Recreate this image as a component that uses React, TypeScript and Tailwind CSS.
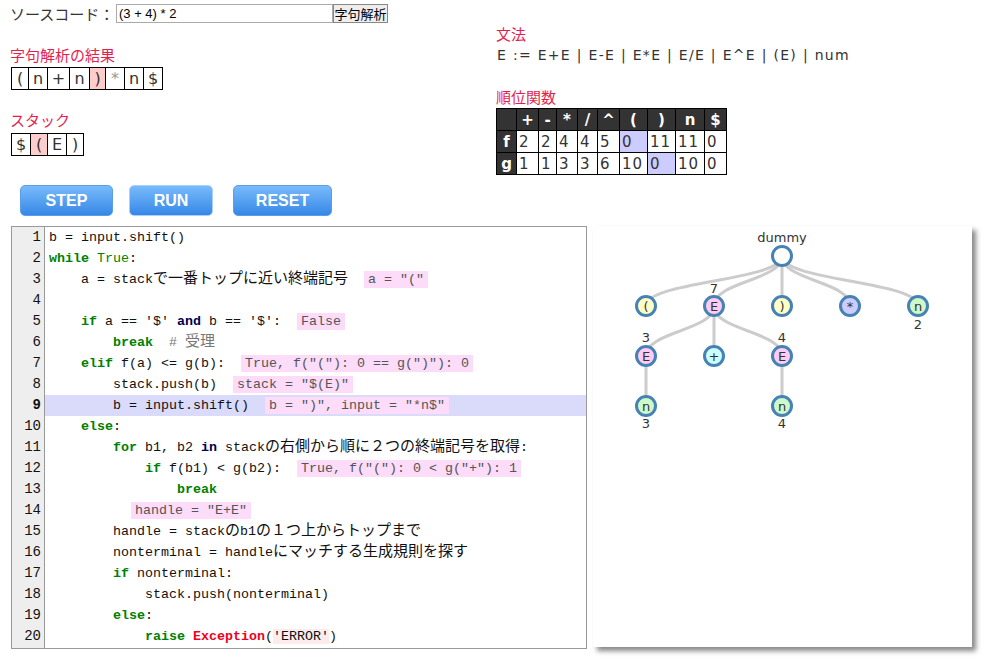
import React from "react";

type Seg = [string, string];

const tokens = [
  { t: "(", w: 17 },
  { t: "n", w: 19 },
  { t: "+", w: 22 },
  { t: "n", w: 20 },
  { t: ")", w: 16, hl: true },
  { t: "*", w: 19, dim: true },
  { t: "n", w: 19 },
  { t: "$", w: 19 },
];

const stack = [
  { t: "$", w: 19 },
  { t: "(", w: 17, hl: true },
  { t: "E", w: 19 },
  { t: ")", w: 17 },
];

const heads = ["", "+", "-", "*", "/", "^", "(", ")", "n", "$"];
const colW = [20, 22, 18, 21, 20, 22, 28, 28, 29, 22];
const fRow = ["2", "2", "4", "4", "5", "0", "11", "11", "0"];
const gRow = ["1", "1", "3", "3", "6", "10", "0", "10", "0"];

const lines: Seg[][] = [
  [["t", "b = input.shift()"]],
  [["k", "while"], ["t", " "], ["g", "True"], ["t", ":"]],
  [["t", "    a = stackで一番トップに近い終端記号"], ["n", 'a = "("']],
  [],
  [["t", "    "], ["k", "if"], ["t", " a == '$' "], ["a", "and"], ["t", " b == '$':"], ["n", "False"]],
  [["t", "        "], ["k", "break"], ["c", "  # 受理"]],
  [["t", "    "], ["k", "elif"], ["t", " f(a) <= g(b):"], ["n", 'True, f("("): 0 == g(")"): 0']],
  [["t", "        stack.push(b)"], ["n", 'stack = "$(E)"']],
  [["t", "        b = input.shift()"], ["n", 'b = ")", input = "*n$"']],
  [["t", "    "], ["k", "else"], ["t", ":"]],
  [["t", "        "], ["k", "for"], ["t", " b1, b2 "], ["a", "in"], ["t", " stackの右側から順に２つの終端記号を取得:"]],
  [["t", "            "], ["k", "if"], ["t", " f(b1) < g(b2):"], ["n", 'True, f("("): 0 < g("+"): 1']],
  [["t", "                "], ["k", "break"]],
  [["m", 'handle = "E+E"']],
  [["t", "        handle = stackのb1の１つ上からトップまで"]],
  [["t", "        nonterminal = handleにマッチする生成規則を探す"]],
  [["t", "        "], ["k", "if"], ["t", " nonterminal:"]],
  [["t", "            stack.push(nonterminal)"]],
  [["t", "        "], ["k", "else"], ["t", ":"]],
  [["t", "            "], ["k", "raise"], ["t", " "], ["x", "Exception"], ["t", "("], ["s", "'ERROR'"], ["t", ")"]],
];

function Mixed({ text }: { text: string }) {
  const parts = text.match(/[\x00-\x7f]+|[^\x00-\x7f]+/g) || [];
  return (
    <>
      {parts.map((p, i) =>
        p.charCodeAt(0) > 0x7f ? (
          <span key={i} className="text-[15px]">{p}</span>
        ) : (
          <span key={i}>{p}</span>
        )
      )}
    </>
  );
}

function Segment({ seg }: { seg: Seg }) {
  const [kind, text] = seg;
  if (kind === "k") return <span className="font-bold text-[#008000]">{text}</span>;
  if (kind === "a") return <span className="font-bold text-[#000050]">{text}</span>;
  if (kind === "g") return <span className="text-[#008000]">{text}</span>;
  if (kind === "x") return <span className="font-bold text-[#f00020]">{text}</span>;
  if (kind === "s") return <span className="bg-[#fcecee]">{text}</span>;
  if (kind === "c") return <span className="text-[#777]"><Mixed text={text} /></span>;
  if (kind === "n")
    return (
      <span className="inline-block ml-[16px] px-[4px] leading-[17px] bg-[#fcdcf8] text-[#555]">{text}</span>
    );
  if (kind === "m")
    return (
      <span className="inline-block ml-[82px] px-[4px] leading-[17px] bg-[#fcdcf8] text-[#555]">{text}</span>
    );
  return <Mixed text={text} />;
}

function Btn({ label, w, focus }: { label: string; w: string; focus?: boolean }) {
  return (
    <button
      className={
        "h-[31px] rounded-[5px] bg-linear-to-b from-[#78bbfb] to-[#3587e6] text-white font-bold text-[16px] font-['Liberation_Sans',sans-serif] border " +
        (focus ? "border-[#a9d0f8] " : "border-[#5a9ee9] ") +
        w
      }
    >
      {label}
    </button>
  );
}

type N = { x: number; y: number; t: string; fill: string };

const nodes: N[] = [
  { x: 189, y: 30, t: "", fill: "#ffffff" },
  { x: 53, y: 80, t: "(", fill: "#ffffc8" },
  { x: 121, y: 80, t: "E", fill: "#fcccf4" },
  { x: 189, y: 80, t: ")", fill: "#ffffc8" },
  { x: 257, y: 80, t: "*", fill: "#ccccff" },
  { x: 325, y: 80, t: "n", fill: "#ccf8cc" },
  { x: 53, y: 130, t: "E", fill: "#fcccf4" },
  { x: 121, y: 130, t: "+", fill: "#ccffff" },
  { x: 189, y: 130, t: "E", fill: "#fcccf4" },
  { x: 53, y: 180, t: "n", fill: "#ccf8cc" },
  { x: 189, y: 180, t: "n", fill: "#ccf8cc" },
];

const edges = [
  [0, 1], [0, 2], [0, 3], [0, 4], [0, 5],
  [2, 6], [2, 7], [2, 8],
  [6, 9], [8, 10],
];

const labels = [
  { x: 189, y: 11, t: "dummy" },
  { x: 121, y: 62, t: "7" },
  { x: 325, y: 98, t: "2" },
  { x: 53, y: 111, t: "3" },
  { x: 189, y: 111, t: "4" },
  { x: 53, y: 197, t: "3" },
  { x: 189, y: 197, t: "4" },
];

function Tree() {
  return (
    <svg width="379" height="421" className="font-['DejaVu_Sans',sans-serif]">
      {edges.map(([a, b], i) => {
        const s = nodes[a];
        const d = nodes[b];
        const m = (s.y + d.y) / 2;
        return (
          <path
            key={i}
            d={`M${s.x},${s.y}C${s.x},${m} ${d.x},${m} ${d.x},${d.y}`}
            fill="none"
            stroke="#cccccc"
            strokeWidth="3"
          />
        );
      })}
      {nodes.map((n, i) => (
        <g key={i}>
          <circle cx={n.x} cy={n.y} r="9.5" fill={n.fill} stroke="#4682b4" strokeWidth="3" />
          <text x={n.x} y={n.y + 4.5} textAnchor="middle" fontSize="13" fill="#333">
            {n.t}
          </text>
        </g>
      ))}
      {labels.map((l, i) => (
        <text key={i} x={l.x} y={l.y + 5} textAnchor="middle" fontSize="13" fill="#333">
          {l.t}
        </text>
      ))}
    </svg>
  );
}

export default function App() {
  return (
    <div className="w-[992px] h-[665px] bg-white overflow-hidden text-[#333] font-['DejaVu_Sans','Noto_Sans_CJK_JP',sans-serif]">
      <div className="flex h-[185px]">
        <div className="w-[496px] pl-[10px] pt-[4px]">
          <div className="flex items-center h-[19px]">
            <span className="text-[15px] font-['Noto_Sans_CJK_JP',sans-serif] leading-[19px] w-[106px]">ソースコード：</span>
            <input
              value="(3 + 4) * 2"
              readOnly
              className="w-[217px] h-[19px] border border-[#aaa] px-[2px] text-[13px] text-black font-['Liberation_Sans',sans-serif] outline-none"
            />
            <button className="w-[55px] h-[19px] border border-[#888] bg-[#eee] text-[13px] leading-[17px] text-black font-['Noto_Sans_CJK_JP',sans-serif]">
              字句解析
            </button>
          </div>

          <div className="mt-[22px] h-[20px] leading-[20px] text-[15px] text-[#e61e50] font-['Noto_Sans_CJK_JP',sans-serif]">
            字句解析の結果
          </div>
          <table className="mt-[2px] ml-[1px] border-collapse text-[16px]">
            <tbody>
              <tr>
                {tokens.map((c, i) => (
                  <td
                    key={i}
                    style={{ width: c.w }}
                    className={
                      "h-[22px] p-0 border border-black text-center leading-[20px] " +
                      (c.hl ? "bg-[#ffcccc] " : "") +
                      (c.dim ? "text-[#999]" : "")
                    }
                  >
                    {c.t}
                  </td>
                ))}
              </tr>
            </tbody>
          </table>

          <div className="mt-[20px] h-[20px] leading-[20px] text-[15px] text-[#e61e50] font-['Noto_Sans_CJK_JP',sans-serif]">
            スタック
          </div>
          <table className="mt-[3px] ml-[1px] border-collapse text-[16px]">
            <tbody>
              <tr>
                {stack.map((c, i) => (
                  <td
                    key={i}
                    style={{ width: c.w }}
                    className={
                      "h-[22px] p-0 border border-black text-center leading-[20px] " +
                      (c.hl ? "bg-[#ffcccc]" : "")
                    }
                  >
                    {c.t}
                  </td>
                ))}
              </tr>
            </tbody>
          </table>
        </div>

        <div className="pt-[24px]">
          <div className="h-[20px] leading-[20px] text-[15px] text-[#e61e50] font-['Noto_Sans_CJK_JP',sans-serif]">文法</div>
          <div className="mt-[1px] ml-[1px] h-[20px] leading-[20px] text-[14px] tracking-[1.3px] whitespace-pre">
            E := E+E | E-E | E*E | E/E | E^E | (E) | num
          </div>
          <div className="mt-[22px] h-[20px] leading-[20px] text-[15px] text-[#e61e50] font-['Noto_Sans_CJK_JP',sans-serif]">
            順位関数
          </div>
          <table className="mt-[1px] border-collapse text-[15px] table-fixed">
            <tbody>
              <tr>
                {heads.map((h, i) => (
                  <td
                    key={i}
                    style={{ width: colW[i] }}
                    className="h-[22px] p-0 border border-black bg-[#333] text-white font-bold text-center leading-[20px]"
                  >
                    {h}
                  </td>
                ))}
              </tr>
              {[
                ["f", fRow, 5],
                ["g", gRow, 6],
              ].map(([name, row, hl]) => (
                <tr key={name as string}>
                  <td className="h-[22px] p-0 border border-black bg-[#333] text-white font-bold text-center leading-[20px]">
                    {name as string}
                  </td>
                  {(row as string[]).map((v, i) => (
                    <td
                      key={i}
                      className={
                        "h-[22px] p-0 pl-[2px] border border-black leading-[20px] tracking-[1px] " +
                        (i === hl ? "bg-[#ccccff]" : "bg-white")
                      }
                    >
                      {v}
                    </td>
                  ))}
                </tr>
              ))}
            </tbody>
          </table>
        </div>
      </div>

      <div className="flex h-[31px] pl-[20px]">
        <Btn label="STEP" w="w-[93px]" />
        <div className="w-[16px]" />
        <Btn label="RUN" w="w-[84px]" focus />
        <div className="w-[20px]" />
        <Btn label="RESET" w="w-[99px]" />
      </div>

      <div className="flex mt-[10px] pl-[11px]">
        <div className="w-[576px] h-[423px] border border-[#999] flex font-['Liberation_Mono','Noto_Sans_CJK_JP',monospace] text-[13.33px] text-[#111]">
          <div className="w-[33px] bg-[#eee] border-r border-[#999] text-[14px]">
            {lines.map((_, i) => (
              <div
                key={i}
                className={"h-[21px] leading-[21px] text-right pr-[3px] " + (i === 8 ? "font-bold" : "")}
              >
                {i + 1}
              </div>
            ))}
          </div>
          <div className="flex-1">
            {lines.map((segs, i) => (
              <div
                key={i}
                className={"h-[21px] leading-[21px] pl-[4px] whitespace-pre " + (i === 8 ? "bg-[#dadafa]" : "")}
              >
                {segs.map((s, j) => (
                  <Segment key={j} seg={s} />
                ))}
              </div>
            ))}
          </div>
        </div>

        <div className="ml-[6px] w-[379px] h-[421px] bg-white shadow-[4px_4px_5px_#888]">
          <Tree />
        </div>
      </div>
    </div>
  );
}
